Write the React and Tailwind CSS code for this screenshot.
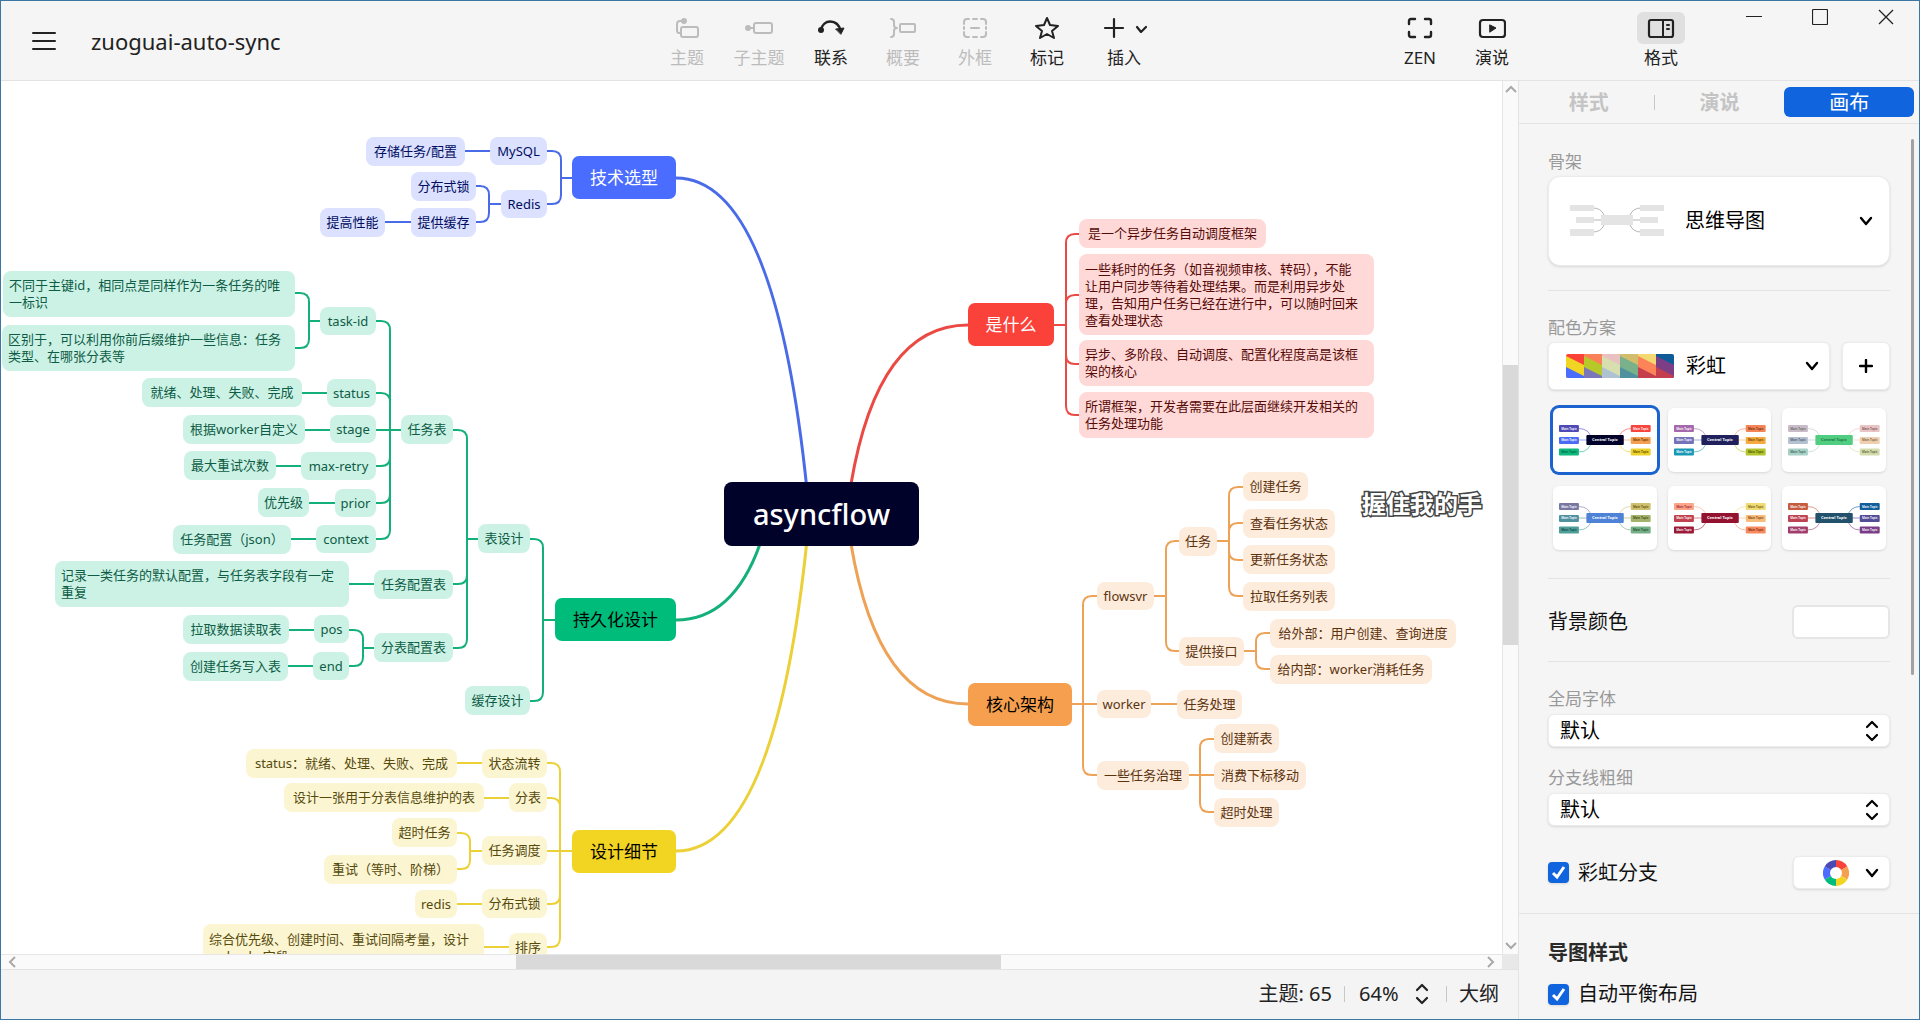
import React from "react";

const THEMES = {
  blue: { main: "bg-[#4a6cff] text-white", sub: "bg-[#dbe1ff] text-[#000d60]", line: "#4a6be8" },
  green: { main: "bg-[#00bc7b] text-black", sub: "bg-[#ccf2e5] text-[#0e5c45]", line: "#14b07a" },
  yellow: { main: "bg-[#f2d423] text-black", sub: "bg-[#fcf5d2] text-[#554a0c]", line: "#ebd037" },
  red: { main: "bg-[#fa423a] text-white", sub: "bg-[#ffd9d8] text-[#570b08]", line: "#ea4a43" },
  orange: { main: "bg-[#f6a04f] text-black", sub: "bg-[#fdecdc] text-[#5c330f]", line: "#eda256" },
};

// [theme, text, x, y, width, height]
const TOPICS = [
  ["blue", "存储任务/配置", 366, 137, 99, 29],
  ["blue", "MySQL", 490, 137, 57, 28],
  ["blue", "分布式锁", 411, 172, 65, 29],
  ["blue", "Redis", 501, 190, 46, 28],
  ["blue", "提供缓存", 411, 208, 65, 29],
  ["blue", "提高性能", 320, 208, 65, 29],
  ["green", "不同于主键id，相同点是同样作为一条任务的唯\n一标识", 3, 271, 292, 46],
  ["green", "区别于，可以利用你前后缀维护一些信息：任务\n类型、在哪张分表等", 2, 325, 293, 46],
  ["green", "task-id", 320, 307, 56, 28],
  ["green", "就绪、处理、失败、完成", 142, 378, 160, 29],
  ["green", "status", 327, 379, 49, 28],
  ["green", "根据worker自定义", 183, 415, 122, 29],
  ["green", "stage", 330, 415, 46, 28],
  ["green", "最大重试次数", 184, 451, 92, 29],
  ["green", "max-retry", 301, 452, 75, 28],
  ["green", "优先级", 258, 488, 51, 29],
  ["green", "prior", 335, 489, 41, 28],
  ["green", "任务配置（json）", 173, 525, 118, 29],
  ["green", "context", 316, 525, 60, 28],
  ["green", "任务表", 401, 415, 52, 29],
  ["green", "表设计", 478, 524, 52, 29],
  ["green", "记录一类任务的默认配置，与任务表字段有一定\n重复", 55, 561, 294, 46],
  ["green", "任务配置表", 374, 570, 79, 29],
  ["green", "pos", 314, 615, 35, 28],
  ["green", "拉取数据读取表", 183, 615, 106, 29],
  ["green", "end", 313, 652, 36, 28],
  ["green", "创建任务写入表", 183, 652, 105, 29],
  ["green", "分表配置表", 374, 633, 79, 29],
  ["green", "缓存设计", 465, 686, 65, 29],
  ["yellow", "status：就绪、处理、失败、完成", 246, 749, 211, 29],
  ["yellow", "状态流转", 482, 749, 65, 29],
  ["yellow", "设计一张用于分表信息维护的表", 284, 783, 200, 29],
  ["yellow", "分表", 509, 783, 38, 29],
  ["yellow", "超时任务", 392, 818, 65, 29],
  ["yellow", "重试（等时、阶梯）", 324, 855, 133, 29],
  ["yellow", "任务调度", 482, 836, 65, 29],
  ["yellow", "redis", 415, 890, 42, 28],
  ["yellow", "分布式锁", 482, 889, 65, 29],
  ["yellow", "综合优先级、创建时间、重试间隔考量，设计\norder_by字段", 203, 924, 281, 47],
  ["yellow", "排序", 509, 933, 38, 29],
  ["red", "是一个异步任务自动调度框架", 1079, 219, 187, 29],
  ["red", "一些耗时的任务（如音视频审核、转码），不能\n让用户同步等待着处理结果。而是利用异步处\n理，告知用户任务已经在进行中，可以随时回来\n查看处理状态", 1079, 254, 295, 81],
  ["red", "异步、多阶段、自动调度、配置化程度高是该框\n架的核心", 1079, 340, 295, 46],
  ["red", "所谓框架，开发者需要在此层面继续开发相关的\n任务处理功能", 1079, 392, 295, 46],
  ["orange", "flowsvr", 1097, 582, 57, 28],
  ["orange", "任务", 1179, 527, 38, 29],
  ["orange", "创建任务", 1243, 472, 65, 29],
  ["orange", "查看任务状态", 1243, 509, 92, 29],
  ["orange", "更新任务状态", 1243, 545, 92, 29],
  ["orange", "拉取任务列表", 1243, 582, 92, 29],
  ["orange", "提供接口", 1179, 637, 65, 29],
  ["orange", "给外部：用户创建、查询进度", 1270, 619, 186, 29],
  ["orange", "给内部：worker消耗任务", 1270, 655, 162, 29],
  ["orange", "worker", 1097, 690, 54, 28],
  ["orange", "任务处理", 1177, 690, 65, 29],
  ["orange", "一些任务治理", 1097, 761, 92, 29],
  ["orange", "创建新表", 1214, 724, 65, 29],
  ["orange", "消费下标移动", 1214, 761, 92, 29],
  ["orange", "超时处理", 1214, 798, 65, 29],
];

const MAIN_TOPICS = [
  ["blue", "技术选型", 572, 156, 104, 43],
  ["green", "持久化设计", 555, 598, 121, 43],
  ["yellow", "设计细节", 572, 830, 104, 43],
  ["red", "是什么", 968, 303, 86, 43],
  ["orange", "核心架构", 968, 683, 104, 43],
];

// [theme, parent x, parent y, trunk x, [[child x, child y], ...]]
const BRANCHES = [
  ["blue", 572, 178, 561, [[547, 151], [547, 204]]],
  ["blue", 490, 151, 478, [[465, 151]]],
  ["blue", 501, 204, 489, [[476, 186], [476, 222]]],
  ["blue", 411, 222, 400, [[385, 222]]],
  ["green", 320, 321, 309, [[295, 293], [295, 348]]],
  ["green", 327, 393, 315, [[302, 393]]],
  ["green", 330, 430, 318, [[305, 430]]],
  ["green", 301, 466, 289, [[276, 466]]],
  ["green", 335, 503, 322, [[309, 503]]],
  ["green", 316, 539, 304, [[291, 539]]],
  ["green", 401, 430, 390, [[376, 321], [376, 393], [376, 430], [376, 466], [376, 503], [376, 539]]],
  ["green", 478, 539, 467, [[453, 430], [453, 584], [453, 648]]],
  ["green", 374, 584, 360, [[349, 584]]],
  ["green", 374, 648, 363, [[349, 630], [349, 666]]],
  ["green", 314, 630, 300, [[289, 630]]],
  ["green", 313, 666, 300, [[288, 666]]],
  ["green", 555, 620, 543, [[530, 539], [530, 701]]],
  ["yellow", 572, 851, 560, [[547, 763], [547, 798], [547, 851], [547, 904], [547, 947]]],
  ["yellow", 482, 763, 470, [[457, 763]]],
  ["yellow", 509, 798, 496, [[484, 798]]],
  ["yellow", 482, 851, 470, [[457, 833], [457, 869]]],
  ["yellow", 482, 904, 470, [[457, 904]]],
  ["yellow", 509, 947, 496, [[484, 947]]],
  ["red", 1054, 325, 1066, [[1079, 234], [1079, 295], [1079, 364], [1079, 415]]],
  ["orange", 1072, 704, 1083, [[1097, 596], [1097, 704], [1097, 775]]],
  ["orange", 1154, 596, 1166, [[1179, 541], [1179, 651]]],
  ["orange", 1217, 541, 1229, [[1243, 487], [1243, 523], [1243, 560], [1243, 596]]],
  ["orange", 1244, 651, 1256, [[1270, 633], [1270, 669]]],
  ["orange", 1151, 704, 1164, [[1177, 704]]],
  ["orange", 1189, 775, 1200, [[1214, 739], [1214, 775], [1214, 812]]],
];

const CURVES = [
  ["blue", "M676 178 Q775 178 807 490"],
  ["green", "M676 620 Q733 620 760 544"],
  ["yellow", "M676 851 Q775 851 807 540"],
  ["red", "M968 325 Q878 325 851 484"],
  ["orange", "M968 704 Q878 704 851 544"],
];

function branchPath(px, py, tx, cx, cy) {
  if (cy === py) return `M${px} ${py} H${cx}`;
  const r = 9;
  const dy = cy > py ? r : -r;
  const dx = cx > tx ? r : -r;
  return `M${px} ${py} H${tx} V${cy - dy} Q${tx} ${cy} ${tx + dx} ${cy} H${cx}`;
}

function Topic({ item, kind }) {
  const [theme, text, x, y, w, h] = item;
  const colors = THEMES[theme][kind];
  const multi = text.includes("\n");
  const size = kind === "main" ? "text-[17px]" : "text-[13px]";
  const radius = kind === "main" ? "rounded-[7px]" : "rounded-lg";
  return (
    <div
      className={`absolute flex items-center whitespace-pre leading-[17px] ${size} ${radius} ${colors} ${multi ? "justify-start pl-[6px]" : "justify-center"}`}
      style={{ left: x, top: y, width: w, height: h }}
    >
      {text}
    </div>
  );
}

function MindMap() {
  return (
    <div className="relative min-w-0 flex-1 overflow-hidden bg-white">
      <div className="absolute -left-px -top-[81px] h-[1000px] w-[1520px]">
        <svg className="absolute inset-0 h-full w-full" fill="none" aria-hidden="true">
          {CURVES.map(([theme, d]) => (
            <path key={d} d={d} stroke={THEMES[theme].line} strokeWidth="3" />
          ))}
          {BRANCHES.map(([theme, px, py, tx, kids]) =>
            kids.map(([cx, cy]) => (
              <path key={`${px}-${cx}-${cy}`} d={branchPath(px, py, tx, cx, cy)} stroke={THEMES[theme].line} strokeWidth="2" />
            ))
          )}
        </svg>
        {TOPICS.map((t) => (
          <Topic key={t.join()} item={t} kind="sub" />
        ))}
        {MAIN_TOPICS.map((t) => (
          <Topic key={t.join()} item={t} kind="main" />
        ))}
        <div className="absolute left-[724px] top-[482px] flex h-16 w-[195px] items-center justify-center rounded-lg bg-[#000229] text-[29px] font-medium leading-9 text-white">
          asyncflow
        </div>
        <div className="absolute left-[1362px] top-[489px] whitespace-nowrap text-[24px] font-bold leading-[30px] text-white [-webkit-text-stroke:3px_#444] [paint-order:stroke_fill]">
          握住我的手
        </div>
      </div>
    </div>
  );
}

function Icon({ w = 28, h = 24, children }) {
  return (
    <svg width={w} height={h} viewBox={`0 0 ${w} ${h}`} fill="none" stroke="currentColor" strokeWidth="2" strokeLinecap="round" strokeLinejoin="round" aria-hidden="true">
      {children}
    </svg>
  );
}

function Chevron({ className = "" }) {
  return (
    <svg className={className} width="14" height="10" viewBox="0 0 14 10" fill="none" stroke="currentColor" strokeWidth="2.4" strokeLinecap="round" strokeLinejoin="round" aria-hidden="true">
      <path d="M2 2 L7 8 L12 2" />
    </svg>
  );
}

function UpDown({ className = "" }) {
  return (
    <svg className={className} width="14" height="22" viewBox="0 0 14 22" fill="none" stroke="currentColor" strokeWidth="2.2" strokeLinecap="round" strokeLinejoin="round" aria-hidden="true">
      <path d="M2 7 L7 2 L12 7 M2 15 L7 20 L12 15" />
    </svg>
  );
}

const ICONS = {
  topic: (
    <Icon>
      <rect x="8" y="11" width="17" height="10" rx="2" />
      <path d="M8 17 H6 Q4 17 4 14 V8 Q4 5 7 5 H9" />
      <circle cx="11" cy="5" r="3" fill="currentColor" stroke="none" />
    </Icon>
  ),
  subtopic: (
    <Icon>
      <circle cx="3" cy="12" r="3" fill="currentColor" stroke="none" />
      <path d="M3 12 H9" />
      <rect x="9" y="7" width="18" height="10" rx="2" />
    </Icon>
  ),
  relation: (
    <Icon>
      <path d="M4 14 C6 3 20 2 24 15" strokeWidth="2.4" />
      <circle cx="4" cy="14" r="3" fill="currentColor" stroke="none" />
      <path d="M19 13 L27 12 L24 18 Z" fill="currentColor" strokeWidth="1" />
    </Icon>
  ),
  summary: (
    <Icon>
      <path d="M2 3 Q5 3 5 6 V9 Q5 12 8 12 Q5 12 5 15 V18 Q5 21 2 21" />
      <rect x="11" y="8" width="15" height="8" rx="1" />
    </Icon>
  ),
  boundary: (
    <Icon>
      <path d="M3 8 V6 Q3 3 6 3 H8 M20 3 H22 Q25 3 25 6 V8 M25 16 V18 Q25 21 22 21 H20 M8 21 H6 Q3 21 3 18 V16 M12 3 H16 M12 21 H16 M3 11 V13 M25 11 V13 M10 12 H18" />
    </Icon>
  ),
  marker: (
    <Icon>
      <path d="M14 2 L17 9 L25 10 L19 15 L21 22 L14 18 L7 22 L9 15 L3 10 L11 9 Z" />
    </Icon>
  ),
  insert: (
    <Icon w={46}>
      <path d="M13 3 V21 M4 12 H22" strokeWidth="2.2" />
      <path d="M36 11 L40 16 L45 11" strokeWidth="2.2" />
    </Icon>
  ),
  zen: (
    <Icon>
      <path d="M3 8 V5 Q3 3 5 3 H9 M19 3 H23 Q25 3 25 5 V8 M25 16 V19 Q25 21 23 21 H19 M9 21 H5 Q3 21 3 19 V16" strokeWidth="2.4" />
    </Icon>
  ),
  pitch: (
    <Icon>
      <rect x="2" y="4" width="25" height="17" rx="3" strokeWidth="2.2" />
      <path d="M12 9 L18 12 L12 16 Z" fill="currentColor" strokeWidth="1" />
    </Icon>
  ),
  format: (
    <Icon>
      <rect x="2" y="4" width="24" height="17" rx="2" strokeWidth="2.2" />
      <path d="M16 4 V21" />
      <path d="M20 9 H22 M20 13 H22" strokeWidth="2" />
    </Icon>
  ),
};

function Tool({ icon, label, muted, active, wide }) {
  return (
    <button type="button" className={`flex flex-col items-center pt-[11px] ${wide ? "w-[82px]" : "w-[72px]"} ${muted ? "text-[#bcbcbc]" : "text-[#222]"}`}>
      <span className={`flex h-8 w-12 items-center justify-center rounded-md ${active ? "bg-[#e0e0e0]" : ""}`}>{ICONS[icon]}</span>
      <span className="pt-[2px] text-[17px] leading-6">{label}</span>
    </button>
  );
}

function Header() {
  return (
    <header className="flex h-20 shrink-0 items-start border-b border-[#e3e3e3] bg-[#f5f5f5]">
      <div className="flex h-full min-w-0 flex-1 items-center gap-[34px] pl-[31px]">
        <button type="button" aria-label="菜单" className="flex h-6 w-[25px] items-center text-[#222]">
          <svg width="25" height="20" viewBox="0 0 25 20" stroke="currentColor" strokeWidth="2" strokeLinecap="round" aria-hidden="true">
            <path d="M1 2 H23 M1 10 H23 M1 18 H23" />
          </svg>
        </button>
        <h1 className="truncate text-[22px] leading-8 text-[#222]">zuoguai-auto-sync</h1>
      </div>
      <nav className="flex" aria-label="工具栏">
        <Tool icon="topic" label="主题" muted />
        <Tool icon="subtopic" label="子主题" muted />
        <Tool icon="relation" label="联系" />
        <Tool icon="summary" label="概要" muted />
        <Tool icon="boundary" label="外框" muted />
        <Tool icon="marker" label="标记" />
        <Tool icon="insert" label="插入" wide />
      </nav>
      <div className="ml-[219px] flex">
        <Tool icon="zen" label="ZEN" />
        <Tool icon="pitch" label="演说" />
      </div>
      <div className="ml-[97px] mr-6 flex">
        <Tool icon="format" label="格式" active />
      </div>
      <div className="flex text-[#222]">
        <button type="button" aria-label="最小化" className="flex h-8 w-[66px] items-center justify-center">
          <svg width="16" height="16" viewBox="0 0 16 16" stroke="currentColor" fill="none"><path d="M0 7.5 H16" /></svg>
        </button>
        <button type="button" aria-label="最大化" className="flex h-8 w-[66px] items-center justify-center">
          <svg width="16" height="16" viewBox="0 0 16 16" stroke="currentColor" fill="none"><rect x="0.5" y="0.5" width="15" height="15" rx="1" strokeWidth="1.2" /></svg>
        </button>
        <button type="button" aria-label="关闭" className="flex h-8 w-[66px] items-center justify-center">
          <svg width="16" height="16" viewBox="0 0 16 16" stroke="currentColor" fill="none"><path d="M1 1 L15 15 M15 1 L1 15" strokeWidth="1.3" /></svg>
        </button>
      </div>
    </header>
  );
}

function StatusBar() {
  return (
    <footer className="flex h-[50px] shrink-0 items-center justify-end border-t border-[#e3e3e3] bg-[#f4f4f4] pb-[2px] pr-[19px] text-[20px] leading-7 text-[#222]">
      <span>主题: 65</span>
      <span className="ml-3 h-4 w-px bg-[#c8c8c8]" />
      <div className="relative ml-[14px] text-[#222]">
        <select aria-label="缩放" className="block w-[70px] appearance-none bg-transparent text-[20px] leading-7">
          <option>64%</option>
        </select>
        <UpDown className="pointer-events-none absolute right-0 top-[3px]" />
      </div>
      <span className="ml-[17px] h-4 w-px bg-[#c8c8c8]" />
      <button type="button" className="ml-3">大纲</button>
    </footer>
  );
}

function Arrow({ d, className }) {
  return (
    <svg className={className} width="12" height="12" viewBox="0 0 12 12" fill="none" stroke="#a9a9a9" strokeWidth="2" aria-hidden="true">
      <path d={d} />
    </svg>
  );
}

function Workspace() {
  return (
    <main className="flex min-w-0 flex-1 flex-col">
      <div className="flex min-h-0 flex-1">
        <MindMap />
        <div className="flex w-4 shrink-0 flex-col items-center border-l border-[#e6e6e6] bg-[#fafafa] pt-[2px] pb-[2px]">
          <Arrow d="M1 9 L6 4 L11 9" />
          <div className="flex w-full flex-1 flex-col">
            <div className="flex-[270]" />
            <div className="flex-[280] bg-[#d9d9d9]" />
            <div className="flex-[295]" />
          </div>
          <Arrow d="M1 3 L6 8 L11 3" />
        </div>
      </div>
      <div className="flex h-[15px] shrink-0">
        <div className="flex min-w-0 flex-1 items-center border-t border-[#e6e6e6] bg-[#fafafa] px-[6px]">
          <Arrow d="M8 1 L3 6 L8 11" />
          <div className="flex h-full flex-1">
            <div className="flex-[497]" />
            <div className="flex-[485] bg-[#d9d9d9]" />
            <div className="flex-[483]" />
          </div>
          <Arrow d="M4 1 L9 6 L4 11" />
        </div>
        <div className="w-4 bg-[#e8e8e8]" />
      </div>
      <StatusBar />
    </main>
  );
}

// c: centre, l: left topics, r: right topics, each as [fill, text colour]
const SCHEMES = [
  { c: ["#000229", "#fff"], l: [["#4d4ab5", "#fff"], ["#4a6cf5", "#fff"], ["#0fb87c", "#064"]], r: [["#f8453d", "#fff"], ["#f3a052", "#653000"], ["#eed22c", "#554400"]] },
  { c: ["#20205c", "#fff"], l: [["#a568ac", "#fff"], ["#7472b8", "#fff"], ["#1898b5", "#fff"]], r: [["#f58556", "#6b2a10"], ["#f5ab41", "#6b4000"], ["#b3c52c", "#445000"]] },
  { c: ["#50cd80", "#1c7a42"], l: [["#c8bccb", "#665"], ["#b3c1d1", "#556"], ["#a8d1c8", "#465"]], r: [["#e9c4c4", "#755"], ["#efcfb0", "#764"], ["#d5dcab", "#564"]] },
  { c: ["#4d82d6", "#fff"], l: [["#7877a2", "#fff"], ["#4f919f", "#fff"], ["#4f9f99", "#144"]], r: [["#cfc06d", "#554a10"], ["#a4b36c", "#3c4510"], ["#75af88", "#1c5030"]] },
  { c: ["#931230", "#fff"], l: [["#fda58a", "#923"], ["#c0424f", "#fff"], ["#9a1a36", "#fff"]], r: [["#f0db74", "#665510"], ["#f8bd7c", "#764010"], ["#f88a60", "#762a10"]] },
  { c: ["#22516c", "#fff"], l: [["#c45c3d", "#fff"], ["#bd4252", "#fff"], ["#a03d6a", "#fff"]], r: [["#105d99", "#fff"], ["#524b96", "#fff"], ["#7a3c86", "#fff"]] },
];

function SchemeArt({ scheme }) {
  const rows = [34, 58, 81];
  const side = (topics, x, left) =>
    topics.map(([fill, ink], i) => (
      <g key={i}>
        <path
          d={i === 1 ? (left ? "M52 64 H70" : "M156 64 H140") : left ? `M52 ${rows[i] + 7} Q74 ${rows[i] + 7} 78 64` : `M156 ${rows[i] + 7} Q136 ${rows[i] + 7} 130 64`}
          stroke={fill}
          strokeWidth="2"
          fill="none"
          opacity="0.6"
        />
        <rect x={x} y={rows[i]} width="40" height="14" rx="2" fill={fill} />
        <text x={x + 20} y={rows[i] + 9} fontSize="6" fontWeight="600" textAnchor="middle" fill={ink}>Main Topic</text>
      </g>
    ));
  return (
    <svg className="h-full w-full" viewBox="0 0 208 128" aria-hidden="true">
      {side(scheme.l, 12, true)}
      {side(scheme.r, 156, false)}
      <rect x="67" y="54" width="75" height="20" rx="2" fill={scheme.c[0]} />
      <text x="104" y="67" fontSize="8" fontWeight="700" textAnchor="middle" fill={scheme.c[1]}>Central Topic</text>
    </svg>
  );
}

const STRIPS = [
  ["#fa4238", "#f2d423", "#4a6cff"],
  ["#fb8258", "#b7c928", "#7a76b8"],
  ["#e8c1c0", "#d8dfae", "#afc2d2"],
  ["#d2bd6c", "#79b18a", "#5091a0"],
  ["#f2d971", "#fd8358", "#c43e4d"],
  ["#0d5c98", "#7c3f85", "#c43e50"],
];

function Palette({ className }) {
  return (
    <svg className={className} width="108" height="24" viewBox="0 0 108 24" aria-hidden="true">
      <clipPath id="strip"><rect width="108" height="24" rx="2" /></clipPath>
      <g clipPath="url(#strip)">
        {STRIPS.map(([a, b, c], i) => (
          <g key={i} transform={`translate(${i * 18} 0)`}>
            <rect width="18" height="24" fill={a} />
            <path d="M0 2 L18 11 V24 H0 Z" fill={b} />
            <path d="M0 13 L18 22 V24 H0 Z" fill={c} />
          </g>
        ))}
      </g>
    </svg>
  );
}

function StructureArt({ className }) {
  return (
    <svg className={className} width="94" height="32" viewBox="0 0 94 32" fill="none" stroke="#b5b5b5" aria-hidden="true">
      <path d="M23 4 Q31 4 34 11 M23 28 Q31 28 34 21 M71 4 Q63 4 60 11 M71 28 Q63 28 60 21 M23 16 H71" />
      <g fill="#e4e4e4" stroke="none">
        <rect y="1" width="24" height="6" />
        <rect x="6" y="13" width="18" height="6" />
        <rect y="25" width="24" height="7" />
        <rect x="31" y="11" width="32" height="10" />
        <rect x="70" y="1" width="24" height="6" />
        <rect x="70" y="13" width="18" height="6" />
        <rect x="70" y="25" width="24" height="7" />
      </g>
    </svg>
  );
}

const WHEEL = ["#f8423a", "#f5a04f", "#f2d423", "#00bc7b", "#4a6cff", "#4a49b5"];

function ColorWheel() {
  const pt = (deg) => {
    const a = ((deg - 90) * Math.PI) / 180;
    return `${13 + 13 * Math.cos(a)} ${13 + 13 * Math.sin(a)}`;
  };
  return (
    <svg width="26" height="26" viewBox="0 0 26 26" aria-hidden="true">
      {WHEEL.map((c, i) => (
        <path key={c} fill={c} d={`M13 13 L${pt(i * 60)} A13 13 0 0 1 ${pt(i * 60 + 60)} Z`} />
      ))}
      <circle cx="13" cy="13" r="6" fill="#fff" />
    </svg>
  );
}

function Check({ label, children }) {
  return (
    <div className="flex items-center justify-between">
      <label className="flex items-center gap-[9px] text-[20px] leading-7 text-[#111]">
        <span className="relative flex">
          <input type="checkbox" defaultChecked className="peer h-[21px] w-[21px] appearance-none rounded bg-[#1064de] shadow-sm" />
          <svg className="pointer-events-none absolute inset-0" width="21" height="21" viewBox="0 0 21 21" fill="none" stroke="#fff" strokeWidth="3" aria-hidden="true">
            <path d="M5 11 L9 15 L16 5" />
          </svg>
        </span>
        {label}
      </label>
      {children}
    </div>
  );
}

function PlainSelect({ id, label }) {
  return (
    <div>
      <label htmlFor={id} className="block text-[17px] leading-[22px] text-[#999]">{label}</label>
      <div className="relative mt-1">
        <select id={id} className="block h-[33px] w-full appearance-none rounded-md border border-[#ececec] bg-white pl-[11px] text-[20px] leading-7 text-black shadow-sm">
          <option>默认</option>
        </select>
        <UpDown className="pointer-events-none absolute right-[11px] top-[6px]" />
      </div>
    </div>
  );
}

function SidePanel() {
  return (
    <aside className="relative flex w-[401px] shrink-0 flex-col border-l border-[#e3e3e3] bg-[#f5f5f5]">
      <div className="flex h-[43px] shrink-0 items-center border-b border-[#e3e3e3] px-[5px] text-[20px] leading-7">
        <button type="button" className="h-[30px] flex-1 pt-[2px] font-bold text-[#c4c4c4]">样式</button>
        <span className="h-[15px] w-px bg-[#c8c8c8]" />
        <button type="button" className="h-[30px] flex-1 pt-[2px] font-bold text-[#c4c4c4]">演说</button>
        <button type="button" className="h-[30px] flex-1 rounded-md bg-[#1064de] pt-px text-white">画布</button>
      </div>
      <div className="absolute right-[5px] top-[58px] h-[536px] w-[3px] rounded-full bg-[#a2a2a2]" />
      <div className="min-h-0 flex-1 overflow-hidden pt-[27px]">
        <div className="px-[29px]">
          <label htmlFor="structure" className="block text-[17px] leading-[22px] text-[#999]">骨架</label>
          <div className="relative mt-[3px]">
            <select id="structure" className="block h-[90px] w-full appearance-none rounded-xl border border-[#ececec] bg-white pl-[136px] text-[20px] leading-7 text-black shadow-sm">
              <option>思维导图</option>
            </select>
            <StructureArt className="pointer-events-none absolute left-[22px] top-[28px]" />
            <Chevron className="pointer-events-none absolute right-[17px] top-[40px]" />
          </div>
          <hr className="mt-6 border-[#e3e3e3]" />

          <label htmlFor="scheme" className="mt-[26px] block text-[17px] leading-[22px] text-[#999]">配色方案</label>
          <div className="mt-[3px] flex gap-3">
            <div className="relative flex-1">
              <select id="scheme" className="block h-12 w-full appearance-none rounded-md border border-[#ececec] bg-white pl-[137px] text-[20px] leading-7 text-black shadow-sm">
                <option>彩虹</option>
              </select>
              <Palette className="pointer-events-none absolute left-[18px] top-3" />
              <Chevron className="pointer-events-none absolute right-[11px] top-[19px]" />
            </div>
            <button type="button" aria-label="添加" className="flex h-12 w-12 items-center justify-center rounded-md border border-[#ececec] bg-white shadow-sm">
              <svg width="14" height="14" viewBox="0 0 14 14" stroke="#000" strokeWidth="2.4" strokeLinecap="round" aria-hidden="true">
                <path d="M7 1 V13 M1 7 H13" />
              </svg>
            </button>
          </div>
          <div className="mt-[18px] grid grid-cols-3 gap-x-[11px] gap-y-[14px] pl-[5px] pr-1">
            {SCHEMES.map((s, i) => (
              <button
                key={i}
                type="button"
                aria-label={`配色 ${i + 1}`}
                className={`h-16 overflow-hidden rounded-md bg-white ${i === 0 ? "ring-3 ring-[#1c63cf]" : "shadow"}`}
              >
                <SchemeArt scheme={s} />
              </button>
            ))}
          </div>
          <hr className="mt-[28px] border-[#e3e3e3]" />

          <div className="mt-[26px] flex items-center justify-between text-[20px] leading-7 text-[#111]">
            <span id="bg-label">背景颜色</span>
            <button type="button" aria-labelledby="bg-label" className="h-[34px] w-[98px] rounded-md border-2 border-[#e6e6e6] bg-white" />
          </div>
          <hr className="mt-[22px] border-[#e3e3e3]" />

          <div className="mt-[26px] flex flex-col gap-5">
            <PlainSelect id="font" label="全局字体" />
            <PlainSelect id="width" label="分支线粗细" />
          </div>
          <div className="mt-[30px]">
            <Check label="彩虹分支">
              <button type="button" aria-label="分支颜色" className="flex h-[33px] w-[97px] items-center justify-end gap-4 rounded-md border border-[#ececec] bg-white pr-[10px] shadow-sm">
                <ColorWheel />
                <Chevron />
              </button>
            </Check>
          </div>
        </div>
        <hr className="mt-6 border-[#e3e3e3]" />
        <div className="px-[29px] pt-[25px]">
          <h2 className="text-[20px] font-bold leading-7 text-[#2a2a2a]">导图样式</h2>
          <div className="mt-[13px]">
            <Check label="自动平衡布局" />
          </div>
        </div>
      </div>
    </aside>
  );
}

export default function App() {
  return (
    <div className="flex h-screen flex-col overflow-hidden border border-[#3c77a3] font-['Noto_Sans','Noto_Sans_CJK_SC',sans-serif]">
      <Header />
      <div className="flex min-h-0 flex-1">
        <Workspace />
        <SidePanel />
      </div>
    </div>
  );
}
